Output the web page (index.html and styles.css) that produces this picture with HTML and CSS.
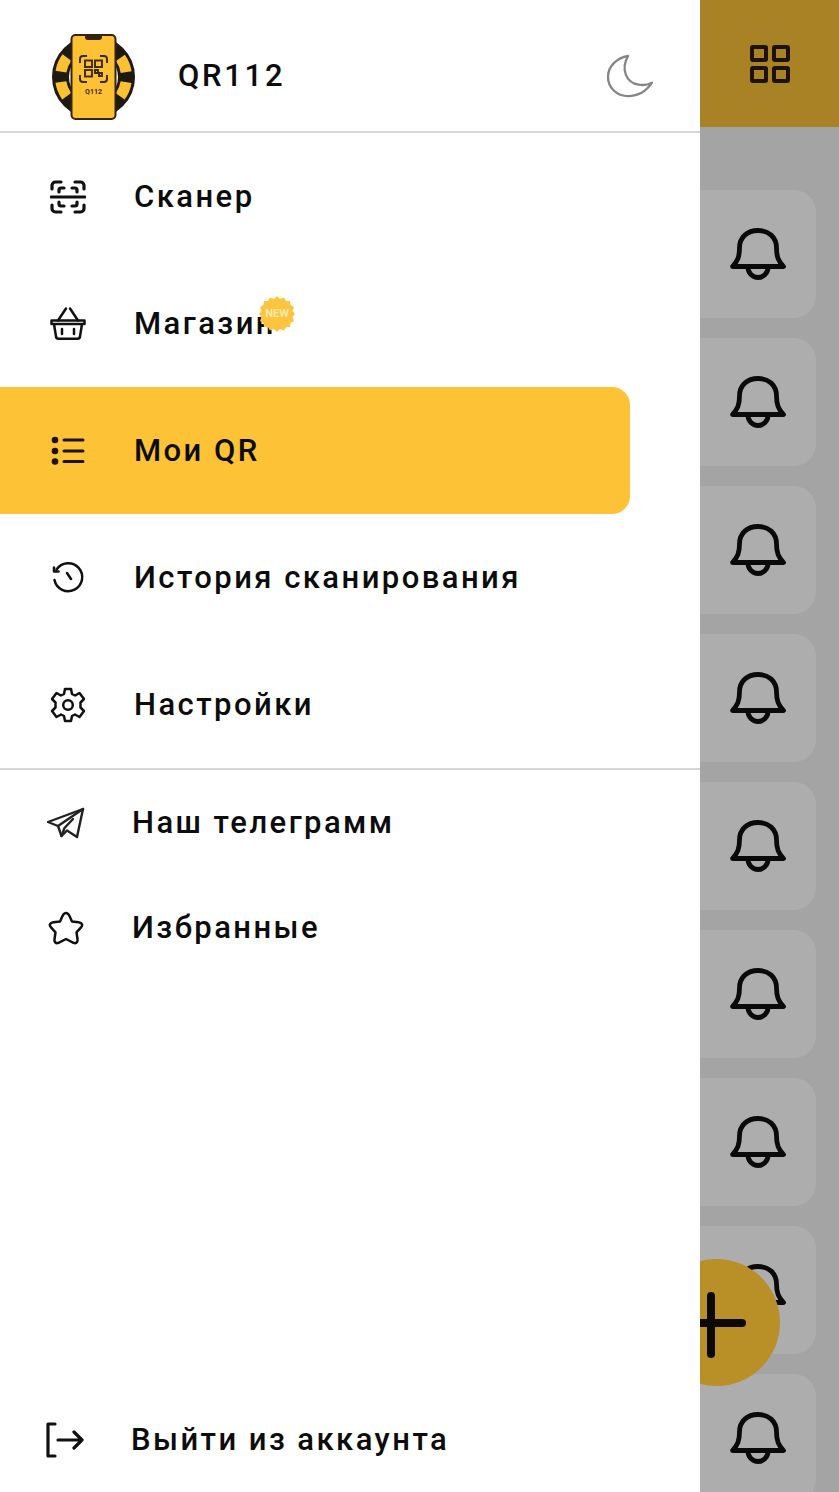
FILE: index.html
```html
<!DOCTYPE html>
<html lang="ru">
<head>
  <meta charset="UTF-8" />
  <meta name="viewport" content="width=device-width, initial-scale=1.0"/>
  <title>QR112</title>
  <link rel="stylesheet" href="styles.css">
</head>
<body>

  <svg class="sprite" width="0" height="0">
    <symbol id="bell" viewBox="0 0 56 53">
      <path d="M2.500 38.500C7.500 33 9.500 29 9.500 20 9.500 9 17.500 2.500 28 2.500S46.500 9 46.500 20c0 9 2 13 7 18.500z" fill="none" stroke="currentColor" stroke-width="4.800" stroke-linejoin="round"/>
      <path d="M18 39.500a10 10 0 0 0 20 0" fill="none" stroke="currentColor" stroke-width="4.800"/>
    </symbol>
  </svg>

  <div class="app">
    <aside class="drawer">
      <header class="drawer-head">
        <svg class="logo" width="88" height="90" viewBox="50 30 88 90">
          <circle cx="93.500" cy="76" r="33" fill="none" stroke="#1d1a12" stroke-width="17"/>
          <circle cx="93.500" cy="76" r="33" fill="none" stroke="#fcc033" stroke-width="11" stroke-dasharray="15.500 10.420" stroke-dashoffset="-5.200"/>
          <rect x="71.500" y="34" width="44" height="84" rx="4" fill="#fdc134" stroke="#33240a" stroke-width="2"/>
          <path d="M85 34h17v2a3 3 0 0 1-3 3H88a3 3 0 0 1-3-3z" fill="#33240a"/>
          <g fill="none" stroke="#3a2a0c" stroke-width="1.900">
            <path d="M80 62v-4a3 3 0 0 1 3-3h4M100 55h4a3 3 0 0 1 3 3v4M107 74v4a3 3 0 0 1-3 3h-4M87 81h-4a3 3 0 0 1-3-3v-4"/>
            <rect x="85" y="59.500" width="7" height="6.500"/>
            <rect x="95" y="59.500" width="7" height="6.500"/>
            <rect x="85" y="69" width="7" height="6.500"/>
            <path d="M95 69h3v3h-3zM99 72h3v3h-3z"/>
          </g>
          <text class="logo-text" x="93.500" y="92.500" text-anchor="middle">Q112</text>
        </svg>
        <span class="brand">QR112</span>
        <svg class="moon" width="48" height="44" viewBox="0 0 50 46">
          <path d="M23 2C12 4 2 12 2 24c0 11 9 20 21 20 10 0 19-5 25-14-4 2-9 3-14 2C21 30 15 16 23 2z" fill="none" stroke="#858585" stroke-width="2.400" stroke-linejoin="round"/>
        </svg>
      </header>

      <nav class="menu">
        <a class="menu-item">
          <svg class="icon" width="36" height="36" viewBox="0 0 36 36" fill="none" stroke="#111" stroke-width="3.200" stroke-linecap="round" stroke-linejoin="round">
            <path d="M2 10V6.500A3.500 3.500 0 0 1 5.500 3H11M25 3h5.500A3.500 3.500 0 0 1 34 6.500V10M34 26v3.500a3.500 3.500 0 0 1-3.500 3.500H25M11 33H5.500A3.500 3.500 0 0 1 2 29.500V26"/>
            <path d="M1 18h34"/>
            <path d="M9 13v-2a2 2 0 0 1 2-2h3M22 9h3a2 2 0 0 1 2 2v2M27 23v2a2 2 0 0 1-2 2h-3M14 27h-3a2 2 0 0 1-2-2v-2"/>
          </svg>
          <span class="label">Сканер</span>
        </a>
        <a class="menu-item">
          <svg class="icon" width="36" height="36" viewBox="0 0 36 36" fill="none" stroke="#111" stroke-width="2.500" stroke-linecap="round" stroke-linejoin="round">
            <path d="M1.500 14.500h33v3.500h-33zM4 18l2 12.500a2.500 2.500 0 0 0 2.500 2.200h19a2.500 2.500 0 0 0 2.500-2.200L32 18"/>
            <path d="M8 14.500l8-12M28 14.500l-8-12"/>
            <path d="M12 23v5M24 23v5"/>
          </svg>
          <span class="label">Магазин
            <svg class="badge" width="36" height="36" viewBox="0 0 36 36">
              <polygon fill="#fdc43f" points="18,0 21,3 25,1.500 27,5 31,5 31.500,9 35,11 33.500,15 36,18 33.500,21 35,25 31.500,27 31,31 27,31 25,34.500 21,33 18,36 15,33 11,34.500 9,31 5,31 4.500,27 1,25 2.500,21 0,18 2.500,15 1,11 4.500,9 5,5 9,5 11,1.500 15,3"/>
              <text class="badge-text" x="18" y="21" text-anchor="middle">NEW</text>
            </svg>
          </span>
        </a>
        <a class="menu-item active">
          <svg class="icon" width="36" height="36" viewBox="0 0 36 36" fill="none" stroke="#1c1203" stroke-width="3" stroke-linecap="round">
            <circle cx="5" cy="7" r="3.300" fill="#1c1203" stroke="none"/>
            <circle cx="5" cy="18" r="3.300" fill="#1c1203" stroke="none"/>
            <circle cx="5" cy="28.500" r="3.300" fill="#1c1203" stroke="none"/>
            <path d="M14 7h19M14 18h19M14 28.500h19"/>
          </svg>
          <span class="label">Мои QR</span>
        </a>
        <a class="menu-item">
          <svg class="icon" width="36" height="36" viewBox="0 0 36 36" fill="none" stroke="#111" stroke-width="2.500" stroke-linecap="round" stroke-linejoin="round">
            <path d="M6.500 9.500A14 14 0 1 1 4.500 20"/>
            <path d="M4 7.500v4h4.500"/>
            <path d="M17 13l4 6"/>
          </svg>
          <span class="label">История сканирования</span>
        </a>
        <a class="menu-item">
          <svg class="icon" width="36" height="36" viewBox="0 0 36 36" fill="none" stroke="#111" stroke-width="2.500" stroke-linejoin="round">
            <circle cx="18" cy="18" r="4.800"/>
            <path d="M15 2h6l1 5 3 1.500 4.500-2.500 4.500 6-3.500 3.500v5l3.500 3.500-4.500 6L25 27.500 22 29l-1 5h-6l-1-5-3-1.500L6.500 30 2 24l3.500-3.500v-5L2 12l4.500-6L11 8.500 14 7z"/>
          </svg>
          <span class="label">Настройки</span>
        </a>
      </nav>

      <nav class="links">
        <a class="link-item">
          <svg class="icon" width="38" height="32" viewBox="0 0 38 32" fill="none" stroke="#222" stroke-width="2.400" stroke-linejoin="round" stroke-linecap="round">
            <path d="M36 2 1 15l10 4 3.500 10 5.500-5.500 10 6.500z"/>
            <path d="M36 2 11 19M26 12 17.500 21l-3 8"/>
          </svg>
          <span class="label">Наш телеграмм</span>
        </a>
        <a class="link-item">
          <svg class="icon" width="36" height="34" viewBox="0 0 36 34" fill="none" stroke="#111" stroke-width="2.500" stroke-linejoin="round">
            <path d="M18 2c1.500 0 2.500 1 3.500 3l2.500 5.500 6.500.800c4 .500 4.500 3 2.500 5l-4.500 5 1 7c.500 3-1.500 4.500-4 3.500L18 28l-7.500 3.800c-2.500 1-4.500-.500-4-3.500l1-7-4.500-5c-2-2-1.500-4.500 2.500-5l6.500-.800L14.500 5c1-2 2-3 3.500-3z"/>
          </svg>
          <span class="label">Избранные</span>
        </a>
      </nav>

      <a class="link-item logout">
        <svg class="icon" width="38" height="36" viewBox="0 0 38 36" fill="none" stroke="#111" stroke-width="3.200" stroke-linecap="round" stroke-linejoin="round">
          <path d="M9 2H2v32h7"/>
          <path d="M12 18h24M28 10l8 8-8 8"/>
        </svg>
        <span class="label">Выйти из аккаунта</span>
      </a>
    </aside>

    <main class="backdrop">
      <div class="top-bar">
        <svg width="40" height="38" viewBox="0 0 40 38" fill="none" stroke="#1c1206" stroke-width="4" stroke-linejoin="round">
          <rect x="2" y="2" width="14" height="13" rx="1"/>
          <rect x="24" y="2" width="14" height="13" rx="1"/>
          <rect x="2" y="23" width="14" height="13" rx="1"/>
          <rect x="24" y="23" width="14" height="13" rx="1"/>
        </svg>
      </div>
      <div class="cards">
        <div class="card"><svg class="bell"><use href="#bell"/></svg></div>
        <div class="card"><svg class="bell"><use href="#bell"/></svg></div>
        <div class="card"><svg class="bell"><use href="#bell"/></svg></div>
        <div class="card"><svg class="bell"><use href="#bell"/></svg></div>
        <div class="card"><svg class="bell"><use href="#bell"/></svg></div>
        <div class="card"><svg class="bell"><use href="#bell"/></svg></div>
        <div class="card"><svg class="bell"><use href="#bell"/></svg></div>
        <div class="card"><svg class="bell"><use href="#bell"/></svg></div>
        <div class="card"><svg class="bell"><use href="#bell"/></svg></div>
      </div>
      <div class="fab">
        <svg width="127" height="127" viewBox="0 0 127 127" stroke="#0c0802" stroke-width="8" stroke-linecap="round">
          <path d="M58 37v58M20 64h69"/>
        </svg>
      </div>
    </main>
  </div>

</body>
</html>
```

FILE: styles.css
```css
body {
  margin: 0;
  padding: 0;
  background: #fff;
  font-family: 'Roboto', 'Liberation Sans', sans-serif;
  color: #0c0c0c;
  overflow: hidden;
}

.sprite {
  display: block;
}

.app {
  display: flex;
  height: 1492px;
  overflow: hidden;
}

/* left drawer */
.drawer {
  width: 700px;
  flex-shrink: 0;
  display: flex;
  flex-direction: column;
  background: #fff;
}

.drawer-head {
  display: flex;
  align-items: center;
  height: 111px;
  padding: 20px 46px 0 50px;
  border-bottom: 2px solid #d6d6d6;
}

.logo-text {
  font-family: 'Roboto', sans-serif;
  font-size: 7px;
  font-weight: 700;
  fill: #3a2a0c;
}

.brand {
  margin-left: 40px;
  font-size: 31px;
  font-weight: 500;
  letter-spacing: 2.700px;
  color: #0c0c0c;
}

.moon {
  margin-left: auto;
}

.label {
  font-size: 31px;
  line-height: 34px;
  font-weight: 500;
  letter-spacing: 2.450px;
  white-space: nowrap;
}

.menu {
  display: flex;
  flex-direction: column;
  border-bottom: 2px solid #d6d6d6;
}

.menu-item {
  display: flex;
  align-items: center;
  gap: 48px;
  height: 127px;
  padding-left: 50px;
}

.menu-item.active {
  width: 580px;
  background: #fdc236;
  border-radius: 0 18px 18px 0;
}

.menu-item .label {
  position: relative;
}

.badge {
  position: absolute;
  top: -11px;
  right: -19px;
}

.badge-text {
  font-family: 'Roboto', sans-serif;
  font-size: 11px;
  font-weight: 700;
  letter-spacing: 0;
  fill: #ffe9a8;
}

.link-item {
  display: flex;
  align-items: center;
  height: 105px;
  padding-left: 47px;
}

.link-item .icon {
  width: 38px;
  margin-right: 47px;
}

.logout {
  margin-top: auto;
  padding-left: 46px;
}

/* dimmed page behind the drawer */
.backdrop {
  position: relative;
  flex: 1;
  overflow: hidden;
  background: #a4a4a4;
}

.top-bar {
  display: flex;
  align-items: center;
  justify-content: center;
  height: 127px;
  background: #a98226;
}

.cards {
  display: flex;
  flex-direction: column;
  gap: 20px;
  padding-top: 63px;
}

.card {
  display: flex;
  align-items: center;
  justify-content: center;
  flex-shrink: 0;
  width: 116px;
  height: 128px;
  background: #adadad;
  border-radius: 0 22px 22px 0;
}

.bell {
  width: 56px;
  height: 53px;
  color: #0a0a0a;
}

.fab {
  position: absolute;
  top: 1259px;
  right: 59px;
  width: 127px;
  height: 127px;
  border-radius: 50%;
  background: #b98f27;
}
```
